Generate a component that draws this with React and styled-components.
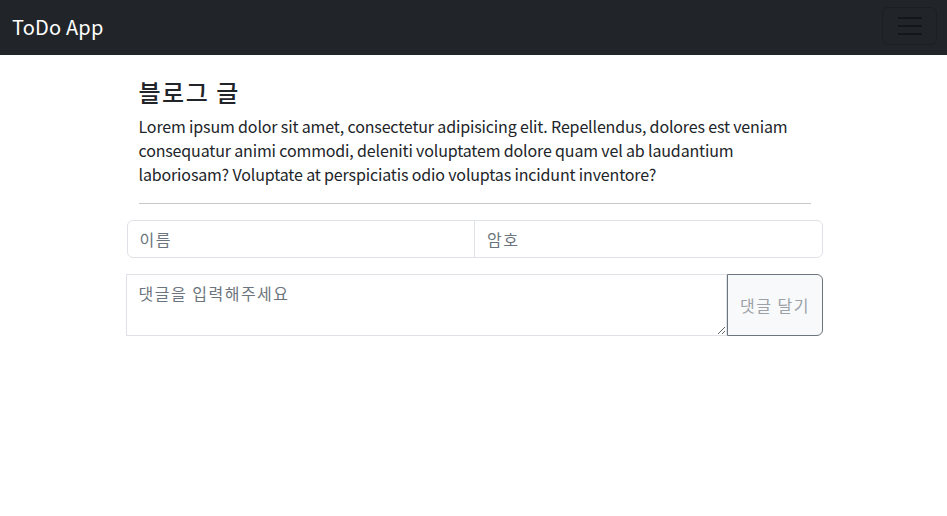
import React from "react";
import styled, { createGlobalStyle } from "styled-components";

const Global = createGlobalStyle`
  html, body { margin: 0; padding: 0; background: #fff; }
  body {
    font-family: "Noto Sans CJK KR", "Noto Sans", sans-serif;
    color: #212529;
  }
  * { box-sizing: border-box; }
`;

const Nav = styled.nav`
  height: 55px;
  background: #212529;
  display: flex;
  align-items: center;
  justify-content: space-between;
  padding: 0 10px 0 12px;
`;

const Brand = styled.a`
  color: #fff;
  font-size: 20px;
  font-family: "Noto Sans CJK KR", sans-serif;
  text-decoration: none;
  line-height: 1;
  letter-spacing: 0.2px;
  margin-top: -1px;
`;

const Toggler = styled.button`
  width: 55px;
  height: 38px;
  margin-top: -3px;
  background: transparent;
  border: 1px solid #1b1e22;
  border-radius: 6px;
  display: flex;
  flex-direction: column;
  align-items: center;
  justify-content: center;
  gap: 6px;
  padding: 0;
`;

const Bar = styled.span`
  display: block;
  width: 24px;
  height: 2px;
  background: #14171a;
`;

const Container = styled.main`
  width: 720px;
  margin: 0 auto;
  padding: 0 12px;
  transform: translateX(1px);
`;

const Article = styled.section`
  padding: 23px 12px 0 12px;
`;

const Title = styled.h4`
  margin: 0 0 7px;
  font-size: 24px;
  font-weight: 500;
  line-height: 1.2;
  letter-spacing: 1.5px;
`;

const Body = styled.p`
  margin: 0;
  font-size: 16px;
  line-height: 24px;
  letter-spacing: -0.15px;
`;

const Rule = styled.hr`
  margin: 17px 0 16px;
  border: 0;
  border-top: 1px solid #c8c9ca;
`;

const Group = styled.div`
  display: flex;
  margin-bottom: ${(p) => p.$mb || 0}px;
`;

const Field = styled.input`
  flex: 1;
  min-width: 0;
  height: 38px;
  border: 1px solid #dee2e6;
  padding: 6px 12px;
  font-size: 16px;
  font-family: inherit;
  letter-spacing: 1.5px;
  color: #212529;
  border-radius: ${(p) => (p.$first ? "6px 0 0 6px" : "0 6px 6px 0")};
  margin-left: ${(p) => (p.$first ? 0 : -1)}px;
  &::placeholder { color: #6c757d; }
`;

const Area = styled.textarea`
  flex: 1;
  height: 62px;
  margin-left: -1px;
  border: 1px solid #dee2e6;
  border-radius: 0;
  padding: 6px 12px;
  font-size: 16px;
  font-family: inherit;
  letter-spacing: 1.5px;
  resize: both;
  &::placeholder { color: #6c757d; }
`;

const Button = styled.button`
  width: 96px;
  height: 62px;
  background: #f8f9fa;
  border: 1px solid #6c757d;
  border-radius: 0 6px 6px 0;
  color: #9ba1a7;
  font-size: 16px;
  font-family: inherit;
  letter-spacing: 1.5px;
  padding: 0 0 0 1px;
`;

export default function App() {
  return (
    <>
      <Global />
      <Nav>
        <Brand href="#">ToDo App</Brand>
        <Toggler aria-label="menu">
          <Bar />
          <Bar />
          <Bar />
        </Toggler>
      </Nav>
      <Container>
        <Article>
          <Title>블로그 글</Title>
          <Body>
            Lorem ipsum dolor sit amet, consectetur adipisicing elit. Repellendus, dolores est veniam
            consequatur animi commodi, deleniti voluptatem dolore quam vel ab laudantium
            laboriosam? Voluptate at perspiciatis odio voluptas incidunt inventore?
          </Body>
          <Rule />
        </Article>
        <Group $mb={16}>
          <Field $first placeholder="이름" />
          <Field placeholder="암호" />
        </Group>
        <Group>
          <Area placeholder="댓글을 입력해주세요" />
          <Button>댓글 달기</Button>
        </Group>
      </Container>
    </>
  );
}
